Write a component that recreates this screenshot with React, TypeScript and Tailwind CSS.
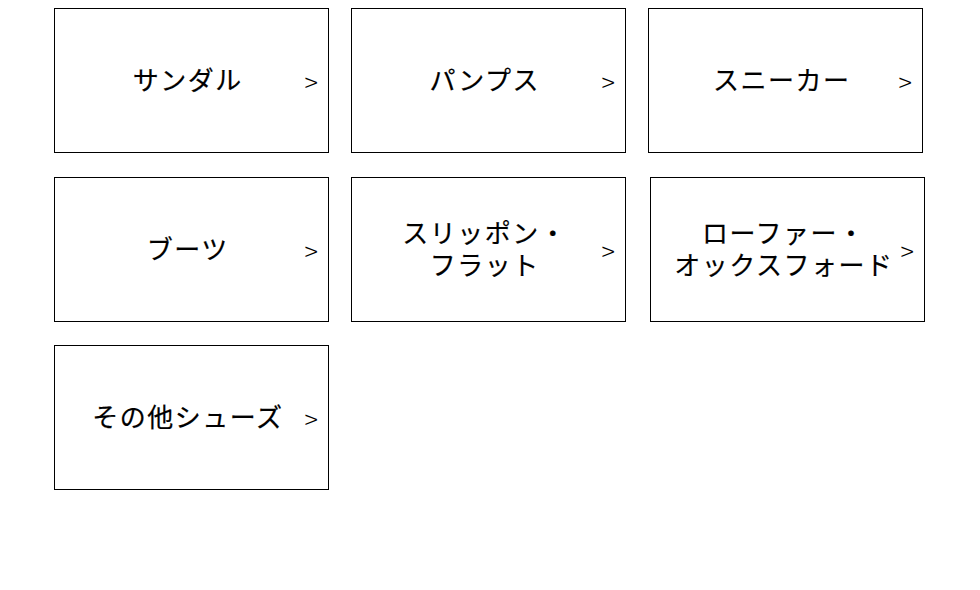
import React from "react";

type Category = {
  lines: string[];
  shift?: boolean;
};

const categories: Category[] = [
  { lines: ["サンダル"] },
  { lines: ["パンプス"] },
  { lines: ["スニーカー"] },
  { lines: ["ブーツ"] },
  { lines: ["スリッポン・", "フラット"] },
  { lines: ["ローファー・", "オックスフォード"], shift: true },
  { lines: ["その他シューズ"] },
];

const CategoryCard = ({ item }: { item: Category }) => (
  <a
    href="#"
    className={`flex h-[145px] w-[275px] items-center border border-black bg-white pb-[3px] pl-4 pr-[10px] text-black ${
      item.shift ? "ml-[2px]" : ""
    }`}
  >
    <span className="flex-1 text-center text-[26px] leading-[32px] font-normal tracking-[1.5px] [-webkit-text-stroke:0.2px_black]">
      {item.lines.map((line, i) => (
        <React.Fragment key={i}>
          {i > 0 && <br />}
          {line}
        </React.Fragment>
      ))}
    </span>
    <span className="mt-[5px] text-[25px] leading-none font-light">&gt;</span>
  </a>
);

export default function App() {
  return (
    <div
      className="min-h-[590px] w-[980px] bg-white pt-[8px] pl-[54px]"
      style={{ fontFamily: '"Noto Sans CJK JP", "Noto Sans", sans-serif' }}
    >
      <div className="grid grid-cols-[275px_275px_275px] gap-x-[22px] gap-y-[23.5px]">
        {categories.map((item, index) => (
          <CategoryCard key={index} item={item} />
        ))}
      </div>
    </div>
  );
}
